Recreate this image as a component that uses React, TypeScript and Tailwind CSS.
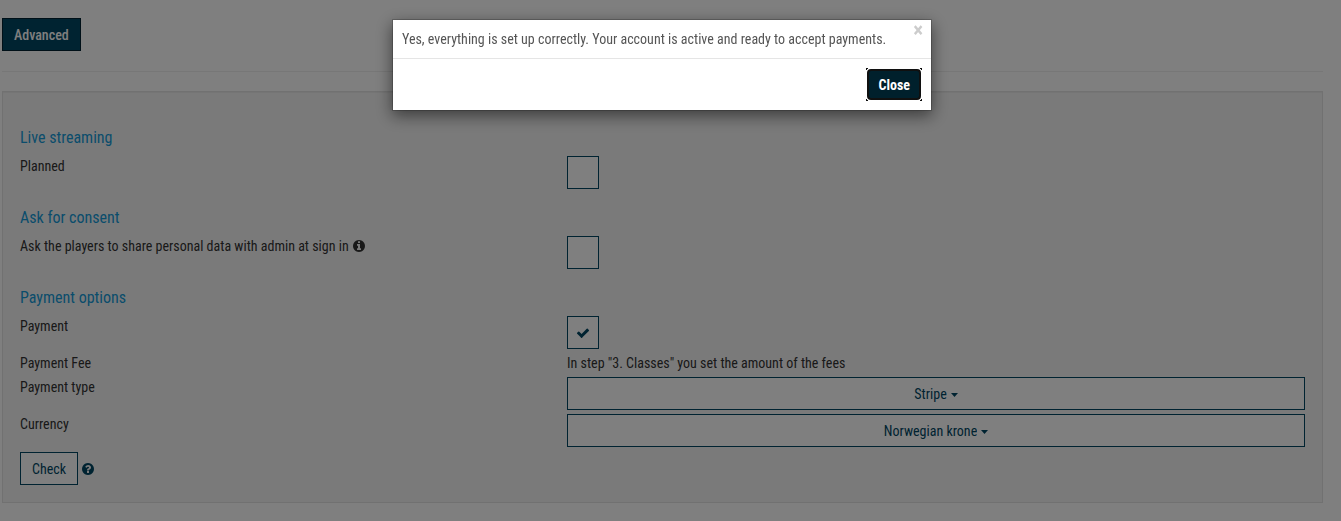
import { useState } from "react";
import type { ReactNode } from "react";

const CIRCLE =
  "m640 416q0 209-103 385.5t-279.5 279.5-385.5 103-385.5-103-279.5-279.5-103-385.5 103-385.5 279.5-279.5 385.5-103 385.5 103 279.5 279.5 103 385.5z";

const InfoIcon = () => (
  <svg viewBox="0 0 1792 1792" className="w-3.5 h-3.5" fill="currentColor">
    <path
      d={
        "M1152 1376v-160q0-14-9-23t-23-9h-96v-512q0-14-9-23t-23-9h-320q-14 0-23 9t-9 23v160q0 14 9 23t23 9h96v320h-96q-14 0-23 9t-9 23v160q0 14 9 23t23 9h448q14 0 23-9t9-23zm-128-896v-160q0-14-9-23t-23-9h-192q-14 0-23 9t-9 23v160q0 14 9 23t23 9h192q14 0 23-9t9-23z" +
        CIRCLE
      }
    />
  </svg>
);

const HelpIcon = () => (
  <svg viewBox="0 0 1792 1792" className="w-3.5 h-3.5" fill="currentColor">
    <path d="M1024 1376v-192q0-14-9-23t-23-9h-192q-14 0-23 9t-9 23v192q0 14 9 23t23 9h192q14 0 23-9t9-23zm256-672q0-88-55.5-163t-138.5-116-170-41q-243 0-371 213-15 24 8 42l132 100q7 6 19 6 16 0 25-12 53-68 86-92 34-24 86-24 48 0 85.5 26t37.5 59q0 38-20 61t-68 45q-63 28-115.5 86.5t-52.5 125.5v36q0 14 9 23t23 9h192q14 0 23-9t9-23q0-19 21.5-49.5t54.5-49.5q32-18 49-28.5t46-35 44.5-48 28-60.5 12.5-81zm384 192q0 209-103 385.5t-279.5 279.5-385.5 103-385.5-103-279.5-279.5-103-385.5 103-385.5 279.5-279.5 385.5-103 385.5 103 279.5 279.5 103 385.5z" />
  </svg>
);

const SectionTitle = ({ children }: { children: ReactNode }) => (
  <h4 className="mt-[19px] mb-2 text-base leading-5 text-[#149ad8]">
    {children}
  </h4>
);

const Row = ({ label, children }: { label: ReactNode; children: ReactNode }) => (
  <div className="grid grid-cols-12 gap-x-7">
    <div className="col-span-5">{label}</div>
    <div className="col-span-7">{children}</div>
  </div>
);

const Checkbox = ({ id, checked = false }: { id: string; checked?: boolean }) => {
  const [on, setOn] = useState(checked);
  return (
    <div className="grid w-8 h-[33px] place-items-center">
      <input
        id={id}
        type="checkbox"
        checked={on}
        onChange={() => setOn(!on)}
        className="appearance-none w-full h-full border border-[#004663] bg-white col-start-1 row-start-1"
      />
      {on && (
        <svg
          viewBox="0 0 1792 1792"
          className="w-3.5 h-3.5 text-[#004663] col-start-1 row-start-1 pointer-events-none"
          fill="currentColor"
        >
          <path d="M1671 566q0 40-28 68l-724 724-136 136q-28 28-68 28t-68-28l-136-136-362-362q-28-28-28-68t28-68l136-136q28-28 68-28t68 28l294 295 656-657q28-28 68-28t68 28l136 136q28 28 28 68z" />
        </svg>
      )}
    </div>
  );
};

const Dropdown = ({ id, options }: { id: string; options: string[] }) => (
  <div className="flex h-[33px] items-center justify-center gap-1 border border-[#004663] bg-white text-[#004663]">
    <select id={id} className="appearance-none [field-sizing:content] bg-transparent">
      {options.map((o) => (
        <option key={o}>{o}</option>
      ))}
    </select>
    <svg viewBox="0 0 7 4" className="w-[7px] h-1 mt-0.5" fill="currentColor">
      <path d="M0 0h7L3.5 4z" />
    </svg>
  </div>
);

const Modal = ({ onClose }: { onClose: () => void }) => (
  <div className="fixed inset-0 bg-black/50 pt-[19px] pr-[17px]">
    <div
      role="dialog"
      aria-modal="true"
      aria-labelledby="modal-text"
      className="mx-auto max-w-[540px] border border-black/20 bg-white bg-clip-padding shadow-[0_5px_15px_rgba(0,0,0,0.5)]"
    >
      <div className="flex items-start justify-between border-b border-[#e5e5e5] pl-[9px] pr-2">
        <p id="modal-text" className="py-[9px] text-[#555]">
          Yes, everything is set up correctly. Your account is active and ready
          to accept payments.
        </p>
        <button
          aria-label="Dismiss"
          onClick={onClose}
          className="text-[21px] leading-[21px] font-bold text-[#ccc]"
        >
          ×
        </button>
      </div>
      <div className="flex justify-end p-[9px]">
        <div className="relative p-px">
          <button
            onClick={onClose}
            className="block h-[31px] rounded border-2 border-[#101010] bg-[#00202c] px-[9px] font-bold text-white"
          >
            Close
          </button>
          {/* focus ring corners */}
          <span className="absolute top-0 left-0 size-0.5 border-t border-l border-[#101010]" />
          <span className="absolute top-0 right-0 size-0.5 border-t border-r border-[#101010]" />
          <span className="absolute bottom-0 left-0 size-0.5 border-b border-l border-[#101010]" />
          <span className="absolute right-0 bottom-0 size-0.5 border-r border-b border-[#101010]" />
        </div>
      </div>
    </div>
  </div>
);

const App = () => {
  const [open, setOpen] = useState(true);

  return (
    <div className="min-h-screen bg-white pt-[18px] pl-[2px] pr-[18px] pb-[18px] font-['Roboto_Condensed','Roboto',sans-serif] text-sm leading-5 text-[#333]">
      <button className="block h-[33px] border border-[#002030] bg-[#004663] px-[11px] font-medium text-white">
        Advanced
      </button>
      <hr className="mt-5 mb-[19px] border-[#eee]" />

      <div className="border border-[#e3e3e3] bg-[#f5f5f5] p-[17px] shadow-[inset_0_1px_1px_rgba(0,0,0,0.05)]">
        <SectionTitle>Live streaming</SectionTitle>
        <Row label={<label htmlFor="live">Planned</label>}>
          <Checkbox id="live" />
        </Row>

        <SectionTitle>Ask for consent</SectionTitle>
        <Row
          label={
            <div className="flex items-center gap-[3px]">
              <label htmlFor="consent">
                Ask the players to share personal data with admin at sign in
              </label>
              <InfoIcon />
            </div>
          }
        >
          <Checkbox id="consent" />
        </Row>

        <SectionTitle>Payment options</SectionTitle>
        <div className="space-y-1">
          <Row label={<label htmlFor="payment">Payment</label>}>
            <Checkbox id="payment" checked />
          </Row>
          <Row label="Payment Fee">
            In step "3. Classes" you set the amount of the fees
          </Row>
          <Row label={<label htmlFor="type">Payment type</label>}>
            <Dropdown id="type" options={["Stripe"]} />
          </Row>
          <Row label={<label htmlFor="currency">Currency</label>}>
            <Dropdown id="currency" options={["Norwegian krone"]} />
          </Row>
          <div className="flex items-center gap-[3px] pt-px text-[#004663]">
            <button
              onClick={() => setOpen(true)}
              className="h-[33px] border border-[#004663] bg-white px-[11px]"
            >
              Check
            </button>
            <HelpIcon />
          </div>
        </div>
      </div>

      {open && <Modal onClose={() => setOpen(false)} />}
    </div>
  );
};

export default App;
